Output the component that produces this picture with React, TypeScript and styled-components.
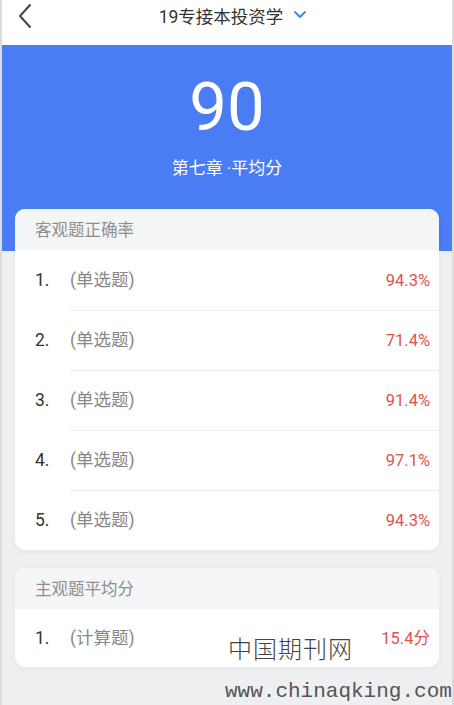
import React from 'react';
import styled, { createGlobalStyle } from 'styled-components';

const GlobalStyle = createGlobalStyle`
  html, body {
    margin: 0;
    padding: 0;
    background: #eeeff1;
  }
  body {
    font-family: Roboto, "Noto Sans CJK SC", sans-serif;
  }
`;

const Page = styled.div`
  position: relative;
  width: 454px;
  min-height: 705px;
  background: #eeeff1;
  border-left: 2px solid #dcdcdf;
  border-right: 2px solid #dcdcdf;
  box-sizing: border-box;
  overflow: hidden;
`;

const TopBar = styled.header`
  height: 45px;
  background: #fff;
  display: flex;
  align-items: center;
  justify-content: center;
  position: relative;
`;

const BackButton = styled.span`
  position: absolute;
  left: 14px;
  top: 3px;
  display: flex;
`;

const Title = styled.div`
  display: flex;
  align-items: center;
  gap: 10px;
  font-size: 17.5px;
  color: #333;
  margin-top: -15px;
  margin-left: 12px;
`;

const Hero = styled.section`
  height: 206px;
  background: #4a7cf4;
  color: #fff;
  display: flex;
  flex-direction: column;
  align-items: center;
`;

const Score = styled.div`
  font-size: 67px;
  line-height: 1;
  margin-top: 29px;
  font-family: Roboto, sans-serif;
`;

const ScoreLabel = styled.div`
  font-size: 17px;
  margin-top: 13px;
`;

const Cards = styled.div`
  display: flex;
  flex-direction: column;
  gap: 18px;
  padding: 0 13px;
  margin-top: -42px;
`;

const Card = styled.div`
  background: #fff;
  border-radius: 10px;
  overflow: hidden;
  box-shadow: 0 2px 6px rgba(0, 0, 0, 0.04);
`;

const CardHeader = styled.div`
  height: 41px;
  background: #f4f5f7;
  display: flex;
  align-items: center;
  padding-left: 20px;
  padding-bottom: 2px;
  box-sizing: border-box;
  font-size: 16.5px;
  color: #8e8e8e;
`;

const Row = styled.div<{ $height: number }>`
  height: ${(p) => p.$height}px;
  display: flex;
  align-items: center;
  padding-left: 20px;
  padding-bottom: 3px;
  box-sizing: border-box;
  font-size: 17.5px;
  position: relative;
  & + &::before {
    content: '';
    position: absolute;
    left: 55px;
    right: 0;
    top: 0;
    height: 1px;
    background: #eeeeee;
  }
`;

const RowLine = styled.div`
  flex: 1;
  display: flex;
  align-items: baseline;
`;

const Num = styled.span`
  width: 35px;
  color: #333;
`;

const Kind = styled.span`
  flex: 1;
  color: #888;
`;

const Value = styled.span`
  color: #e2524b;
  font-size: 16.5px;
  padding-right: 9px;
`;

const WatermarkCn = styled.div`
  position: absolute;
  left: 226px;
  top: 630px;
  font-family: "Noto Sans CJK SC", sans-serif;
  font-weight: 200;
  font-size: 24px;
  letter-spacing: 1px;
  color: #444;
`;

const WatermarkUrl = styled.div`
  position: absolute;
  left: 223px;
  top: 680px;
  font-family: "Liberation Mono", monospace;
  font-size: 21px;
  color: #555;
`;

const objective = ['94.3%', '71.4%', '91.4%', '97.1%', '94.3%'];

export default function App() {
  return (
    <Page>
      <GlobalStyle />
      <TopBar>
        <BackButton>
          <svg width="20" height="26" viewBox="0 0 20 26" fill="none">
            <path d="M14 2 L4 13 L14 24" stroke="#444" strokeWidth="2" strokeLinecap="round" strokeLinejoin="round" />
          </svg>
        </BackButton>
        <Title>
          19专接本投资学
          <svg width="14" height="10" viewBox="0 0 14 10" fill="none">
            <path d="M2 2 L7 7 L12 2" stroke="#3a8ee6" strokeWidth="2" strokeLinecap="round" strokeLinejoin="round" />
          </svg>
        </Title>
      </TopBar>
      <Hero>
        <Score>90</Score>
        <ScoreLabel>第七章 ·平均分</ScoreLabel>
      </Hero>
      <Cards>
        <Card>
          <CardHeader>客观题正确率</CardHeader>
          {objective.map((v, i) => (
            <Row key={i} $height={60}>
              <RowLine>
                <Num>{i + 1}.</Num>
                <Kind>(单选题)</Kind>
                <Value>{v}</Value>
              </RowLine>
            </Row>
          ))}
        </Card>
        <Card>
          <CardHeader>主观题平均分</CardHeader>
          <Row $height={58}>
            <RowLine>
              <Num>1.</Num>
              <Kind>(计算题)</Kind>
              <Value>15.4分</Value>
            </RowLine>
          </Row>
        </Card>
      </Cards>
      <WatermarkCn>中国期刊网</WatermarkCn>
      <WatermarkUrl>www.chinaqking.com</WatermarkUrl>
    </Page>
  );
}
